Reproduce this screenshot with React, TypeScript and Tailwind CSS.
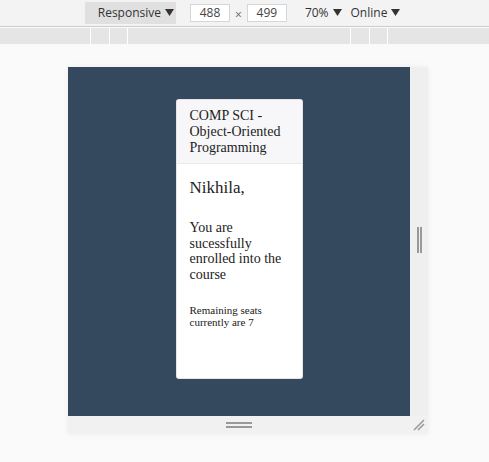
import React from "react";

const Caret = () => (
  <svg width="9" height="8" viewBox="0 0 9 8" className="ml-[4px] inline-block">
    <path d="M0 0 H9 L4.5 7 Z" fill="#333" />
  </svg>
);

const Toolbar = () => (
  <div className="h-[27px] bg-[#f3f3f3] border-b border-[#cccccc] flex items-center text-[12px] text-[#333] font-['Open_Sans',sans-serif]">
    <div className="ml-[85px] w-[91px] h-[22px] bg-[#e0e0e0] flex items-center justify-end pr-[2px]">
      Responsive
      <Caret />
    </div>
    <div className="ml-[14px] w-[40px] h-[18px] bg-white border border-[#d6d6d6] flex items-center justify-center text-[#444]">
      488
    </div>
    <span className="mx-[5px] text-[#666] mt-[3px]">×</span>
    <div className="w-[40px] h-[18px] bg-white border border-[#d6d6d6] flex items-center justify-center text-[#444]">
      499
    </div>
    <div className="ml-[18px] flex items-center">
      70%
      <Caret />
    </div>
    <div className="ml-[9px] flex items-center">
      Online
      <Caret />
    </div>
  </div>
);

const Ruler = () => (
  <div className="mt-[1px] h-[16px] bg-[#e5e5e5] flex">
    <div className="w-[90px]" />
    <div className="w-[19px] border-l border-white" />
    <div className="w-[18px] border-l border-white" />
    <div className="w-[223px] border-l border-white" />
    <div className="w-[19px] border-l border-white" />
    <div className="w-[18px] border-l border-white" />
    <div className="flex-1 border-l border-white" />
  </div>
);

const Card = () => (
  <div className="w-[127px] h-[280px] mt-[32px] bg-white rounded-[3px] border border-black/10 overflow-hidden font-['Liberation_Serif',serif] text-[#222]">
    <div className="bg-[#f7f7f9] border-b border-black/5 px-[13px] pt-[8px] pb-[7px] text-[14px] leading-[16px]">
      COMP SCI - Object-Oriented Programming
    </div>
    <div className="px-[13px] pt-[14px]">
      <div className="text-[17px] leading-[20px]">Nikhila,</div>
      <div className="mt-[22px] text-[14px] leading-[15.5px]">
        You are sucessfully enrolled into the course
      </div>
      <div className="mt-[22px] text-[11px] leading-[12px]">
        Remaining seats currently are 7
      </div>
    </div>
  </div>
);

export default function App() {
  return (
    <div className="w-[489px] h-[462px] bg-[#fafafa] overflow-hidden">
      <Toolbar />
      <Ruler />
      <div className="pt-[23px] pl-[68px]">
        <div className="grid grid-cols-[342px_18px] grid-rows-[349px_18px] w-[360px] shadow-[0_0_6px_rgba(0,0,0,0.06)]">
          <div className="bg-[#34495e] flex justify-center items-start">
            <Card />
          </div>
          <div className="bg-[#efefef] flex items-center justify-center gap-[1px] pb-[4px]">
            <div className="w-[2px] h-[26px] bg-[#999]" />
            <div className="w-[2px] h-[26px] bg-[#999]" />
          </div>
          <div className="bg-[#f1f1f1] flex flex-col items-center justify-center gap-[2px]">
            <div className="w-[26px] h-[2px] bg-[#999]" />
            <div className="w-[26px] h-[2px] bg-[#999]" />
          </div>
          <div className="bg-[#f1f1f1] flex items-center justify-center">
            <svg width="14" height="14" viewBox="0 0 14 14">
              <path d="M2 12 L12 2 M6 12 L12 6" stroke="#999" strokeWidth="1.5" />
            </svg>
          </div>
        </div>
      </div>
    </div>
  );
}
